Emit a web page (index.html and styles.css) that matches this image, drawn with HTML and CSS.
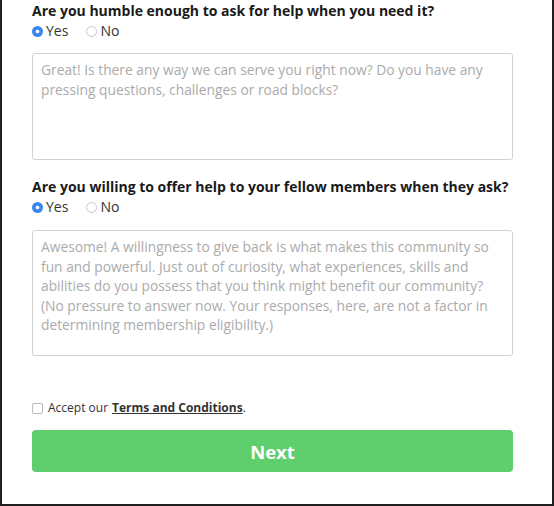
FILE: index.html
```html
<!DOCTYPE html>
<html>
<head>
<meta charset="utf-8">
<link rel="stylesheet" href="styles.css">
</head>
<body>
<div class="frame">
  <form class="form">
    <div class="question">
      <h2 class="q-title">Are you humble enough to ask for help when you need it?</h2>
      <div class="radios">
        <label class="radio"><span class="dot dot-on"></span>Yes</label>
        <label class="radio"><span class="dot"></span>No</label>
      </div>
      <div class="area area-1">Great! Is there any way we can serve you right now? Do you have any pressing questions, challenges or road blocks?</div>
    </div>
    <div class="question q2">
      <h2 class="q-title">Are you willing to offer help to your fellow members when they ask?</h2>
      <div class="radios">
        <label class="radio"><span class="dot dot-on"></span>Yes</label>
        <label class="radio"><span class="dot"></span>No</label>
      </div>
      <div class="area area-2">Awesome! A willingness to give back is what makes this community so fun and powerful. Just out of curiosity, what experiences, skills and abilities do you possess that you think might benefit our community? (No pressure to answer now. Your responses, here, are not a factor in determining membership eligibility.)</div>
    </div>
    <label class="terms"><span class="box"></span>Accept our <a class="link">Terms and Conditions</a>.</label>
    <div class="btn">Next</div>
  </form>
</div>
</body>
</html>
```
FILE: styles.css
```css
html, body {
  margin: 0;
  padding: 0;
  background: #fff;
}
body {
  font-family: "Open Sans", "Lato", sans-serif;
  color: #222;
}
.frame {
  box-sizing: border-box;
  width: 554px;
  height: 506px;
  border-left: 2px solid #1f1f1f;
  border-right: 2px solid #1f1f1f;
  border-bottom: 2px solid #1f1f1f;
  padding: 2px 39px 0 30px;
}
.form {
  display: flex;
  flex-direction: column;
}
.q-title {
  margin: 0;
  font-size: 14px;
  line-height: 18px;
  font-weight: 700;
  color: #1a1a1a;
  white-space: nowrap;
}
.radios {
  display: flex;
  gap: 18px;
  margin-top: 2px;
  font-size: 14px;
  line-height: 18px;
  color: #333;
}
.radio {
  display: flex;
  align-items: center;
  gap: 3px;
}
.dot {
  box-sizing: border-box;
  width: 11px;
  height: 11px;
  border-radius: 50%;
  border: 1px solid #c8c8c8;
  background: #fff;
}
.dot-on {
  border: none;
  background: radial-gradient(circle, #fff 0 1.6px, #3a86f0 2.2px);
}
.area {
  box-sizing: border-box;
  border: 1px solid #d2d2d2;
  border-radius: 3px;
  padding: 6px 8px;
  font-size: 13.8px;
  line-height: 19.5px;
  color: #ababab;
}
.area-1 { height: 107px; margin-top: 13px; }
.area-2 { height: 126px; margin-top: 14px; }
.q2 { margin-top: 18px; }
.terms {
  display: flex;
  align-items: center;
  margin-top: 44px;
  font-size: 12px;
  line-height: 16px;
  color: #333;
}
.box {
  box-sizing: border-box;
  width: 11px;
  height: 11px;
  border: 1px solid #bbb;
  border-radius: 2px;
  margin-right: 5px;
}
.link {
  font-weight: 700;
  text-decoration: underline;
  color: #333;
  margin-left: 4px;
}
.btn {
  margin-top: 14px;
  height: 42px;
  border-radius: 4px;
  background: #5fce6c;
  color: #fff;
  font-size: 18.5px;
  font-weight: 700;
  display: flex;
  align-items: center;
  justify-content: center;
}
```
